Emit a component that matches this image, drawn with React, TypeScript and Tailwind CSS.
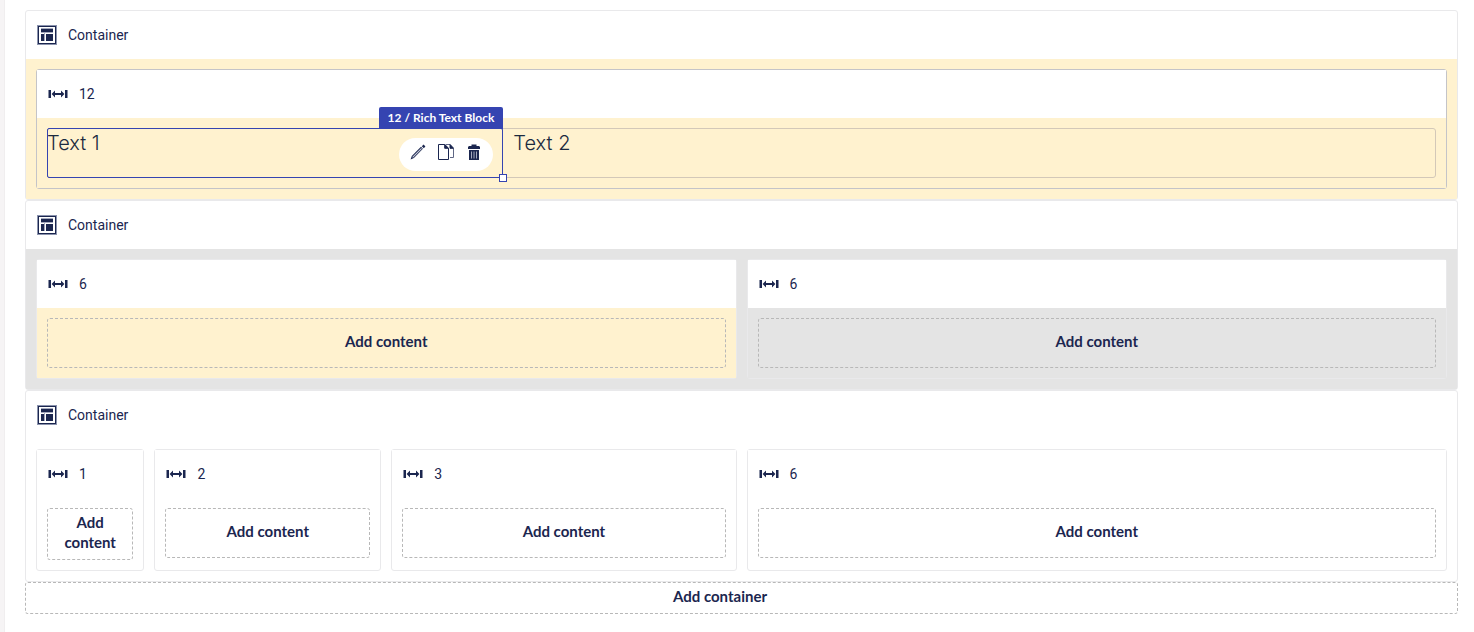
import clsx from "clsx";

type Tone = "none" | "yellow" | "grey";

interface AreaData {
  span: 1 | 2 | 3 | 6 | 12;
  tone: Tone;
}

const spans = {
  1: "col-span-1",
  2: "col-span-2",
  3: "col-span-3",
  6: "col-span-6",
  12: "col-span-12",
};

const tones = {
  none: "",
  yellow: "bg-[#fff2cf]",
  grey: "bg-[#e4e4e4]",
};

function LayoutIcon() {
  return (
    <svg viewBox="0 0 20 20" className="size-5" aria-hidden="true">
      <rect width="20" height="20" fill="#8b93ad" />
      <rect x="1" y="1" width="18" height="18" fill="#1b264f" />
      <rect x="2" y="2" width="16" height="16" fill="#fff" />
      <path d="M4 3h12v1H4zM4 7h12v1H4zM7 8h1v8H7z" fill="#a4a9bd" />
      <path d="M4 4h12v3H4zM4 9h3v7H4zM9 9h7v7H9z" fill="#1b264f" />
    </svg>
  );
}

function WidthIcon() {
  return (
    <svg viewBox="0 0 20 20" className="size-5" fill="#1b264f" aria-hidden="true">
      <path d="M0.5 6h2.5v8H0.5zM17 6h2.5v8H17z" />
      <path d="M3.6 10 7 6.4V9h6V6.4l3.4 3.6-3.4 3.6V11H7v2.6z" />
    </svg>
  );
}

function PencilIcon() {
  return (
    <svg viewBox="0 0 16 16" className="size-4" aria-hidden="true">
      <path d="M.6 15.4 1.8 12 11 2.8l1.9 1.9L3.9 14z" fill="#1b264f" />
      <path d="M11.8 2.2 13.6.6l1.8 1.8-1.6 1.8z" fill="#1b264f" />
      <path d="M2.6 13.3 11.6 4.3" stroke="#c4c8d6" strokeWidth="1.1" />
    </svg>
  );
}

function CopyIcon() {
  return (
    <svg viewBox="0 0 16 16" className="size-4" fill="none" stroke="#1b264f" aria-hidden="true">
      <path d="M.5.5h6.2l3.8 3.8v11.2H.5z" />
      <path d="M6.7.5v3.8h3.8z" fill="#1b264f" />
      <path d="M8 .5h4l3.5 3.8v9.2h-3.5" stroke="#5f6785" />
      <path d="M12 .5v3.8h3.5z" fill="#1b264f" />
    </svg>
  );
}

function TrashIcon() {
  return (
    <svg viewBox="0 0 16 16" className="size-4" fill="#1b264f" aria-hidden="true">
      <path d="M2 5V3l1-1h2.5V.5h5V2H13l1 1v2zM3 6h10v10H3z" />
      <path d="M5.5 7.5v7M8 7.5v7M10.5 7.5v7" stroke="#a4a9bd" />
    </svg>
  );
}

function ContainerBlock({ tone, areas, children }: { tone: Tone; areas?: AreaData[]; children?: React.ReactNode }) {
  return (
    <section className="rounded-[3px] border border-[#e9e9eb]">
      <header className="flex h-12 items-center gap-[11px] px-[11px]">
        <LayoutIcon />
        <h2>Container</h2>
      </header>
      <div className={clsx("grid grid-cols-12 gap-[10px] p-[10px]", tones[tone])}>
        {areas?.map((area, i) => (
          <Area key={i} {...area}>
            <button className="min-h-[50px] w-full rounded-[3px] border border-dashed border-[#b8b8b8] px-4 pt-[3px] pb-[7px] font-['Lato'] text-[15px] leading-5 font-bold">
              Add content
            </button>
          </Area>
        ))}
        {children}
      </div>
    </section>
  );
}

function Area({ span, tone, strong, children }: AreaData & { strong?: boolean; children: React.ReactNode }) {
  return (
    <div className={clsx("flex flex-col rounded-[3px] border", spans[span], strong ? "border-[#c4c4c8]" : "border-[#e9e9eb]")}>
      <header className="flex h-12 items-center gap-[11px] bg-white px-[11px]">
        <WidthIcon />
        <span>{span}</span>
      </header>
      <div className={clsx("grow p-[10px]", tones[tone])}>{children}</div>
    </div>
  );
}

function RichTextRow() {
  return (
    <div className="grid h-[50px] grid-cols-12 gap-[10px] rounded-[3px] font-['Inter'] text-xl leading-[30px] font-light text-[#1b2a3f] outline outline-1 -outline-offset-1 outline-[#d3c8b8]">
      <div className="relative z-10 col-span-4 rounded-[2px] outline outline-1 -outline-offset-1 outline-[#3544b1]">
        <p>Text 1</p>
        <div className="absolute -top-[21px] right-0 rounded-t-[2px] bg-[#3544b1] px-[9px] font-['Lato'] text-xs leading-[22px] font-bold text-white">
          12 / Rich Text Block
        </div>
        <div className="absolute top-[10px] right-[10px] flex h-[33px] items-center gap-3 rounded-full bg-white px-[11px] pb-[5px]">
          <button aria-label="Edit"><PencilIcon /></button>
          <button aria-label="Copy"><CopyIcon /></button>
          <button aria-label="Delete"><TrashIcon /></button>
        </div>
        <span className="absolute -right-1 -bottom-1 size-2 border border-[#3544b1] bg-white" />
      </div>
      <div className="col-span-8">
        <p>Text 2</p>
      </div>
    </div>
  );
}

export default function App() {
  return (
    <div className="flex min-h-screen bg-white font-['Roboto'] text-sm text-[#1b264f]">
      <aside className="w-[5px] shrink-0 border-r border-[#f0eeef] bg-[#f6f4f5]" />
      <main className="grow pt-[10px] pr-4 pb-4 pl-5">
        <ContainerBlock tone="yellow">
          <Area span={12} tone="yellow" strong>
            <RichTextRow />
          </Area>
        </ContainerBlock>
        <ContainerBlock
          tone="grey"
          areas={[
            { span: 6, tone: "yellow" },
            { span: 6, tone: "grey" },
          ]}
        />
        <ContainerBlock
          tone="none"
          areas={[
            { span: 1, tone: "none" },
            { span: 2, tone: "none" },
            { span: 3, tone: "none" },
            { span: 6, tone: "none" },
          ]}
        />
        <button className="h-8 w-full rounded-[3px] border border-dashed border-[#b8b8b8] pr-[43px] pb-[5px] font-['Lato'] text-[15px] leading-5 font-bold">
          Add container
        </button>
      </main>
    </div>
  );
}
